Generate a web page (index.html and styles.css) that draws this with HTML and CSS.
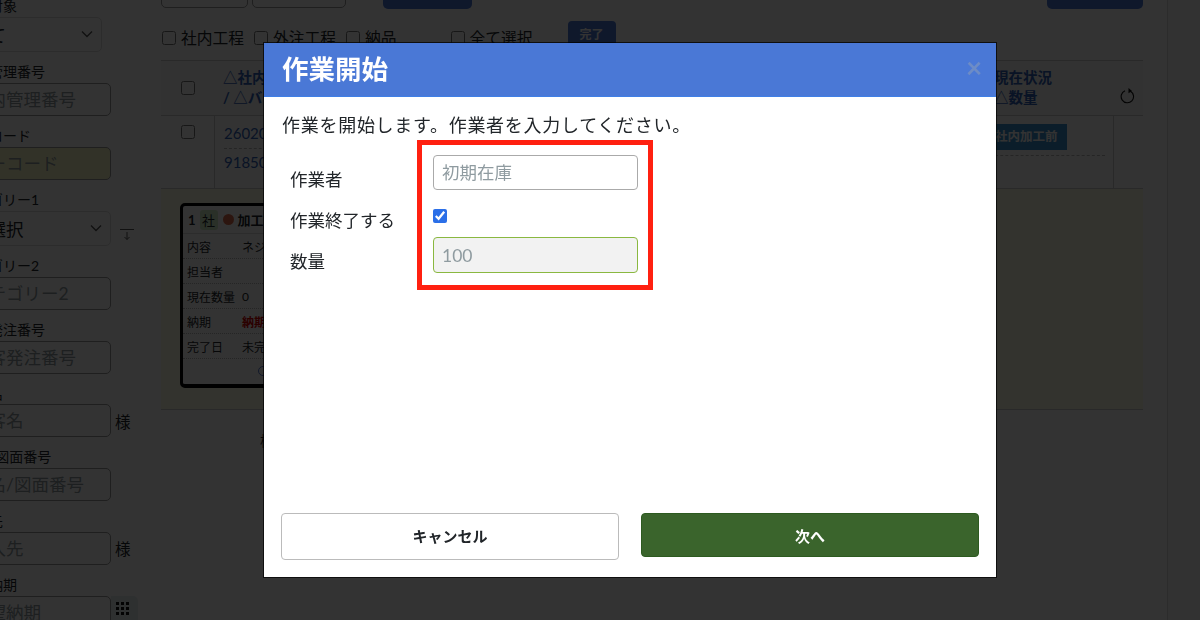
FILE: index.html
```html
<!DOCTYPE html>
<html lang="ja">
<head>
<meta charset="utf-8">
<title>作業開始</title>
<link rel="stylesheet" href="styles.css">
</head>
<body>
<div class="app">
  <aside class="side">
    <div class="fld fld-sel"><label>検索対象</label><div class="sel sel-a"><span>全て</span><svg class="chev" width="12" height="8" viewBox="0 0 12 8"><path d="M1 1.500l5 5 5-5" fill="none" stroke="#555" stroke-width="1.400"/></svg></div></div>
    <div class="fld"><label>社内管理番号</label><input class="inp" placeholder="社内管理番号"></div>
    <div class="fld"><label>バーコード</label><input class="inp inp-y" placeholder="バーコード"></div>
    <div class="fld fld-sel"><label>カテゴリー1</label><div class="row"><div class="sel"><span>未選択</span><svg class="chev" width="12" height="8" viewBox="0 0 12 8"><path d="M1 1.500l5 5 5-5" fill="none" stroke="#555" stroke-width="1.400"/></svg></div><svg class="sort" width="14" height="12" viewBox="0 0 14 12"><path d="M0 .5h14M7 3v7.500M4.500 8L7 10.500 9.500 8" fill="none" stroke="#555" stroke-width="1"/></svg></div></div>
    <div class="fld"><label>カテゴリー2</label><input class="inp" placeholder="カテゴリー2"></div>
    <div class="fld"><label>顧客発注番号</label><input class="inp" placeholder="顧客発注番号"></div>
    <div class="fld"><label>顧客名</label><div class="row"><input class="inp" placeholder="顧客名"><span class="suffix">様</span></div></div>
    <div class="fld"><label>品名/図面番号</label><input class="inp" placeholder="品名/図面番号"></div>
    <div class="fld"><label>納入先</label><div class="row"><input class="inp" placeholder="納入先"><span class="suffix">様</span></div></div>
    <div class="fld"><label>希望納期</label><div class="row"><input class="inp" placeholder="希望納期"><span class="addon"><svg width="13" height="13" viewBox="0 0 13 13" fill="#111"><path d="M0 0h3v3H0zM5 0h3v3H5zM10 0h3v3h-3zM0 5h3v3H0zM5 5h3v3H5zM10 5h3v3h-3zM0 10h3v3H0zM5 10h3v3H5zM10 10h3v3h-3z"/></svg></span></div></div>
  </aside>
  <main class="main">
    <div class="toolbar">
      <div class="tbox tbox-a"></div>
      <div class="tbox tbox-b"></div>
      <div class="tbtn tbtn-a"></div>
      <div class="tbtn tbtn-b"></div>
    </div>
    <div class="checks">
      <label class="chk"><input type="checkbox">社内工程</label>
      <label class="chk"><input type="checkbox">外注工程</label>
      <label class="chk"><input type="checkbox">納品</label>
      <label class="chk chk-all"><input type="checkbox">全て選択</label>
      <span class="done">完了</span>
    </div>
    <div class="thead">
      <div class="c-check"><input type="checkbox"></div>
      <div class="c-name"><div>△社内管理番号</div><div>/ △バーコード</div></div>
      <div class="c-status"><div>現在状況</div><div>△数量</div></div>
      <div class="c-reload"><svg width="16" height="16" viewBox="0 0 16 16"><path d="M10.500 3.200A6.200 6.200 0 1 1 5 2.800" fill="none" stroke="#111" stroke-width="1.100"/><path d="M8.500 0l3.500 3-3.500 2.200z" fill="#111"/></svg></div>
    </div>
    <div class="tbody">
      <div class="c-check"><input type="checkbox"></div>
      <div class="c-id"><a>26020001</a><a class="dash">91850001</a></div>
      <div class="c-badge"><span class="badge">社内加工前</span><div class="dashline"></div></div>
      <div class="c-end"></div>
    </div>
    <div class="yellow">
      <div class="card">
        <div class="card-title"><b>1</b><span class="sha">社</span><i class="dot"></i><b>加工前</b></div>
        <div class="card-row"><span>内容</span><span>ネジ加工</span></div>
        <div class="card-row"><span>担当者</span><span></span></div>
        <div class="card-row"><span>現在数量</span><span>0</span></div>
        <div class="card-row"><span>納期</span><span class="late">納期超過</span></div>
        <div class="card-row"><span>完了日</span><span>未完了</span></div>
        <div class="card-foot"><i class="ring"></i></div>
      </div>
    </div>
    <p class="count">検索結果</p>
  </main>
  <div class="rail"></div>
</div>

<div class="overlay">
  <section class="modal">
    <header class="m-head">
      <h1>作業開始</h1>
      <span class="close">×</span>
    </header>
    <div class="m-body">
      <p class="lead">作業を開始します。作業者を入力してください。</p>
      <div class="form">
        <div class="names">
          <div>作業者</div>
          <div>作業終了する</div>
          <div>数量</div>
        </div>
        <div class="redbox">
          <input class="m-inp" placeholder="初期在庫">
          <input class="m-chk" type="checkbox" checked>
          <input class="m-inp m-qty" placeholder="100" disabled>
        </div>
      </div>
    </div>
    <footer class="m-foot">
      <button class="b-cancel">キャンセル</button>
      <button class="b-next">次へ</button>
    </footer>
  </section>
</div>
</body>
</html>
```

FILE: styles.css
```css
* { box-sizing: border-box; }
html, body { margin: 0; height: 620px; overflow: hidden; background: #fff; }
body { font-family: Lato, "Noto Sans CJK JP", sans-serif; color: #212529; }

.app { display: flex; height: 620px; overflow: hidden; }

.side { flex: none; width: 161px; margin-top: -14px; margin-left: -39px; margin-right: 39px; }
.fld { height: 63.75px; font-size: 14px; }
.fld-sel { height: 66.25px; }
.fld label { display: block; height: 30.75px; line-height: 20px; padding-top: 10px; white-space: nowrap; }
.row { display: flex; align-items: center; width: 200px; }
.inp { display: block; flex: none; width: 150px; height: 33px; padding: 0 9px; border: 1px solid #999; border-radius: 5px; font: 17.5px Lato, "Noto Sans CJK JP", sans-serif; background: #fff; outline: 0; }
.inp::placeholder, .m-inp::placeholder { color: #8f9ba0; }
.inp-y { background: #fafac8; }
.sel { position: relative; flex: none; width: 150px; height: 35px; line-height: 35px; padding-left: 9px; border: 1px solid #ddd; border-radius: 5px; font-size: 17.5px; }
.sel-a { width: 141px; }
.chev { position: absolute; right: 8px; top: 12px; }
.sort { align-self: flex-end; margin: 0 0 5px 9px; }
.suffix { margin-left: 4px; font-size: 15.5px; }
.addon { display: flex; align-items: flex-start; justify-content: center; padding: 6px 4px 0 0; width: 27px; height: 33px; background: #e6eef0; border-radius: 0 5px 5px 0; }

.main { flex: none; width: 982px; margin-top: -25px; }
.toolbar { display: flex; height: 34px; }
.tbox { height: 33px; border: 1px solid #999; border-radius: 5px; }
.tbox-a { width: 87px; }
.tbox-b { width: 94px; margin-left: 4px; }
.tbtn { height: 34px; background: #4a78d6; border-radius: 5px; }
.tbtn-a { width: 89px; margin-left: 37px; }
.tbtn-b { width: 96px; margin-left: auto; }
.checks { display: flex; align-items: center; height: 51px; padding: 6px 0 0 1px; font-size: 15.75px; }
.chk { display: flex; align-items: center; margin-right: 10px; white-space: nowrap; }
.chk input { width: 14px; height: 14px; margin: 0 5px 0 0; }
.chk-all { margin-left: 44px; margin-right: 35px; }
.done { padding: 5px 12px; height: 28px; margin-top: -6px; background: #4a78d6; color: #fff; font-size: 12px; line-height: 18px; font-weight: 700; border-radius: 4px; }

.thead, .tbody { display: grid; grid-template-columns: 54px 1fr 129px 29px; }
.thead { height: 56px; border-top: 1px solid #ccc; border-bottom: 1px solid #ccc; background: #f8f8f8; font-size: 14.5px; font-weight: 700; color: #2f5fb8; line-height: 20px; }
.thead .c-check { display: flex; align-items: center; padding-left: 20px; }
.thead input, .tbody input { width: 14px; height: 14px; margin: 0; }
.c-name { padding: 7px 0 0 8px; }
.c-status { padding: 7px 0 0 9px; white-space: nowrap; }
.c-reload { padding-top: 27px; padding-left: 6px; }
.tbody { height: 73px; border-bottom: 1px solid #ccc; }
.tbody .c-check { padding: 7px 0 0 20px; border-right: 1px solid #ccc; }
.c-id { display: flex; flex-direction: column; padding: 6px 0 0 9px; width: 300px; font-size: 15px; color: #2f5fb8; }
.c-id a { line-height: 22px; height: 26px; }
.dash { border-top: 1px dashed #bbb; padding-top: 2px; height: 30px; }
.c-badge { padding: 8px 8px 0 0; border-right: 1px solid #ccc; }
.badge { display: block; width: 82px; height: 26px; line-height: 26px; padding-left: 10px; background: #3b92cf; color: #fff; font-size: 12.5px; font-weight: 700; white-space: nowrap; }
.dashline { margin-top: 5px; border-top: 1px dashed #bbb; }

.yellow { height: 221px; padding: 14px 19px; background: #fdfde6; border-bottom: 1px solid #ccc; }
.card { width: 240px; height: 185px; background: #fff; border: 3px solid #000; border-bottom-width: 4px; border-radius: 5px; font-size: 12px; }
.card-title { display: flex; align-items: center; gap: 3px; height: 28px; padding-left: 5px; border-bottom: 1px solid #ddd; font-size: 13px; }
.sha { margin-left: 1px; padding: 0 2.500px; height: 20px; line-height: 20px; font-size: 13px; background: #d3f0c8; border-radius: 3px; }
.dot { width: 11px; height: 11px; margin: 0 1px 0 2px; border-radius: 50%; background: #dd6b4a; }
.card-row { display: grid; grid-template-columns: 55px 1fr; align-items: center; height: 25px; padding-left: 4px; border-bottom: 1px dotted #bbb; }
.late { color: #d80000; font-weight: 700; }
.card-foot { padding: 7px 0 0 75px; }
.ring { display: block; width: 10px; height: 10px; border: 1px solid #5a7ad0; border-radius: 50%; }
.count { margin: 20px 0 0 99px; font-size: 14px; }

.rail { flex: none; margin-left: 24px; width: 33px; border-left: 1px solid #ddd; background: #fafafa; }

.overlay { position: fixed; inset: 0; background: rgba(0,0,0,.8); }
.modal { position: absolute; left: 264px; top: 43px; width: 732px; height: 534px; display: flex; flex-direction: column; background: #fff; box-shadow: 0 0 0 1px rgba(0,0,0,.7); }
.m-head { display: flex; justify-content: space-between; flex: none; height: 54px; padding: 0 18px; background: #4a78d6; border-bottom: 1px solid #3f7fe6; }
.m-head h1 { margin: 0; font-size: 26.5px; line-height: 53px; font-weight: 700; color: #fff; }
.close { margin: 4px 0 0; width: 12px; font-size: 28px; line-height: 40px; font-weight: 700; color: #6d8cc6; }
.m-body { flex: 1; padding: 15px 18px 0; }
.lead { margin: 0; font-size: 18px; line-height: 26px; letter-spacing: .72px; }
.form { display: flex; margin-top: 2px; padding-left: 8px; }
.names { width: 127px; padding-top: 19px; font-size: 17.5px; }
.names div { height: 41px; line-height: 41px; white-space: nowrap; }
.redbox { display: flex; flex-direction: column; align-items: flex-start; width: 236px; height: 150px; padding: 10px 11px; border: 5px solid #ff2010; }
.m-inp { width: 205px; height: 35px; padding: 0 8px; border: 1px solid #aaa; border-radius: 4px; font: 17.5px Lato, "Noto Sans CJK JP", sans-serif; outline: 0; background: #fff; }
.m-chk { width: 14px; height: 14px; margin: 19px 0 14px; accent-color: #2b6fe8; }
.m-qty { height: 36px; background: #f2f2f2; border-color: #8ab840; }
.m-foot { display: flex; flex: none; gap: 22px; align-items: flex-start; height: 64px; padding: 0 17px; }
.m-foot button { flex: 1; border-radius: 4px; font: 700 15px Lato, "Noto Sans CJK JP", sans-serif; }
.b-cancel { height: 47px; padding-bottom: 3px; background: #fff; border: 1px solid #bbb; color: #212529; }
.b-next { height: 44px; background: #3a642c; border: 1px solid #2d5a20; color: #fff; }
```
